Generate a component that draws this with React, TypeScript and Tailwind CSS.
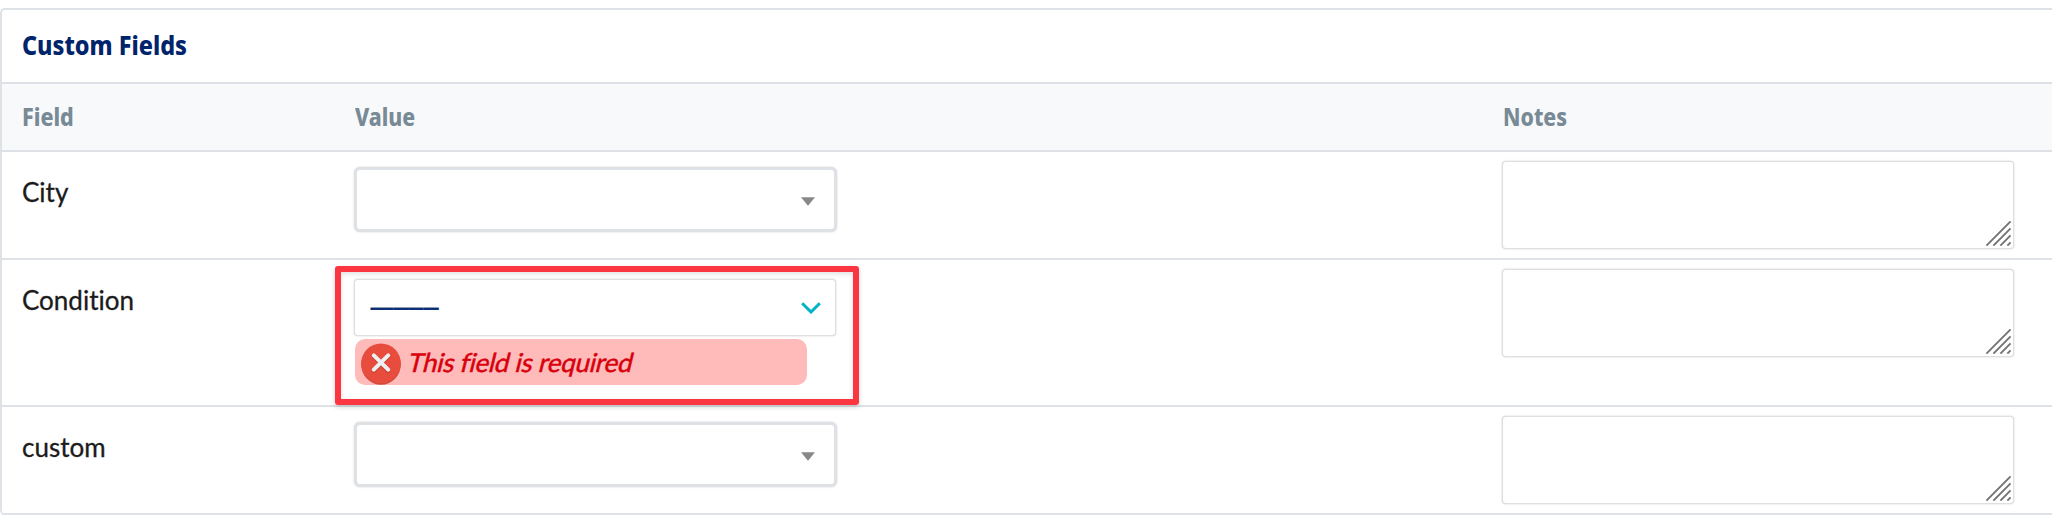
import React from "react";

const heading = "inline-block origin-left font-['Noto_Sans',sans-serif] font-extrabold whitespace-nowrap";

function SearchSelect() {
  return (
    <div className="mt-4 ml-[355px] flex h-[63px] w-[481px] items-center justify-end rounded-[5px] border-2 border-[#dee2e6] bg-white pr-[19px] shadow-[0_0_0_1px_#dfe1e3,0_0_2px_1px_rgba(0,0,0,0.2)]">
      <svg className="mt-1" width="14" height="9" viewBox="0 0 14 9">
        <path d="M0 0.3H14L7 8.8Z" fill="#888888" />
      </svg>
    </div>
  );
}

function NotesArea() {
  return (
    <div className="mt-[10px] flex h-[86px] w-[510px] items-end justify-end rounded-[3px] bg-white pr-[2px] pb-[2px] shadow-[0_0_0_1px_#dfdfdf,0_0_2px_1px_rgba(0,0,0,0.2)]">
      <svg width="25" height="25" viewBox="0 0 25 25" fill="none" stroke="#737373" strokeWidth="1.9">
        <path d="M0.4 24.6L24.6 0.4M7.4 24.6L24.6 7.4M14.4 24.6L24.6 14.4M21.4 24.6L24.6 21.4" />
      </svg>
    </div>
  );
}

function RequiredSelect() {
  return (
    <div className="mt-[6px] ml-[335px] h-[139px] w-[524px] rounded-[3px] border-6 border-[#fb3640] pt-2 pl-[14px] shadow-[0_2px_5px_rgba(0,0,0,0.18),inset_0_2px_5px_rgba(0,0,0,0.12)]">
      <div className="flex h-[55px] w-[480px] items-center justify-between rounded-[3px] bg-white px-[14px] shadow-[0_0_0_1px_#dfdfdf,0_0_2px_1px_rgba(0,0,0,0.2)]">
        <span className="-mt-[2px] font-['Liberation_Sans',sans-serif] text-[32px] leading-[53px] tracking-[-3.1px] text-[#0b2f75]">---------</span>
        <svg width="20" height="12" viewBox="0 0 20 12" fill="none" stroke="#00b4c8" strokeWidth="3">
          <path d="M1.2 1.2L10 10L18.8 1.2" />
        </svg>
      </div>
      <div className="mt-1 flex h-[46px] w-[452px] items-center rounded-[10px] bg-[#ffbaba] pl-[6px]">
        <svg className="mt-1" width="40" height="42" viewBox="0 0 40 42">
          <ellipse cx="20" cy="21.5" rx="19.8" ry="20.3" fill="#cf4a3c" />
          <ellipse cx="20" cy="20.3" rx="19.8" ry="19.9" fill="#e74c3c" />
          <path d="M12.8 12.8L27.2 27.2M27.2 12.8L12.8 27.2" stroke="#c94335" strokeWidth="4" strokeLinecap="round" transform="translate(0 1)" />
          <path d="M12.8 12.3L27.2 26.7M27.2 12.3L12.8 26.7" stroke="#ecf0f1" strokeWidth="4" strokeLinecap="round" />
        </svg>
        <span className="ml-[8px] inline-block -skew-x-[14deg] font-['Lato',sans-serif] text-[26px] leading-[46px] tracking-[-0.24px] whitespace-nowrap text-[#d8000c] [-webkit-text-stroke:0.5px_#d8000c]">This field is required</span>
      </div>
    </div>
  );
}

function Row({ label, required = false }: { label: string; required?: boolean }) {
  return (
    <div className={required ? "flex h-[147px] border-b-2 border-[#dee2e6]" : "flex h-[108px] border-b-2 border-[#dee2e6]"}>
      <div className="w-0 pt-[24px]">
        <span className="ml-5 inline-block font-['Lato',sans-serif] text-[26px] leading-8 whitespace-nowrap text-[#1b1b1b] [-webkit-text-stroke:0.3px_#1b1b1b] [font-variant-ligatures:none]">{label}</span>
      </div>
      <div className="-ml-[2px] w-[1503px]">{required ? <RequiredSelect /> : <SearchSelect />}</div>
      <NotesArea />
    </div>
  );
}

export default function App() {
  return (
    <div className="h-[520px] w-[2052px] overflow-hidden bg-white pt-2">
      <div className="w-[2060px] rounded-[5px] border-t-2 border-l-2 border-[#dee2e6]">
        <div className="flex h-[74px] items-center border-b-2 border-[#dee2e6] pb-[2px] pl-5">
          <span className={heading + " text-[26px] text-[#00246b] scale-x-[0.9]"}>Custom Fields</span>
        </div>
        <div className="flex h-[68px] items-center border-b-2 border-[#dee2e6] bg-[#f7f9fb] pb-px pl-5 text-[25px] text-[#788a95]">
          <div className="w-[333px]"><span className={heading + " scale-x-[0.86]"}>Field</span></div>
          <div className="w-[1148px]"><span className={heading + " scale-x-[0.85]"}>Value</span></div>
          <div><span className={heading + " scale-x-[0.85]"}>Notes</span></div>
        </div>
        <Row label="City" />
        <Row label="Condition" required />
        <Row label="custom" />
      </div>
    </div>
  );
}
